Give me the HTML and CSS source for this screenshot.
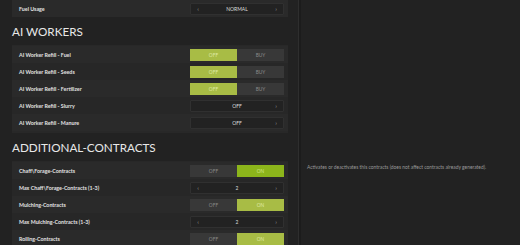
FILE: index.html
```html
<!DOCTYPE html>
<html>
	<head>
		<meta charset="UTF-8">
		<title>Settings</title>
		<link rel="stylesheet" href="styles.css">
	</head>
	<body>
		<div class="page">
			<div class="main">
				<div class="panel panelTop">
					<div class="row">
						<span class="label">Fuel Usage</span>
						<div class="select"><span class="arr">&lsaquo;</span><span class="val">NORMAL</span><span class="arr">&rsaquo;</span></div>
					</div>
				</div>
				<h2 class="title">AI WORKERS</h2>
				<div class="panel">
					<div class="row">
						<span class="label">AI Worker Refill - Fuel</span>
						<div class="toggle"><span class="opt sel">OFF</span><span class="opt">BUY</span></div>
					</div>
					<div class="row alt">
						<span class="label">AI Worker Refill - Seeds</span>
						<div class="toggle"><span class="opt sel">OFF</span><span class="opt">BUY</span></div>
					</div>
					<div class="row">
						<span class="label">AI Worker Refill - Fertilizer</span>
						<div class="toggle"><span class="opt sel">OFF</span><span class="opt">BUY</span></div>
					</div>
					<div class="row alt">
						<span class="label">AI Worker Refill - Slurry</span>
						<div class="select"><span class="arr"></span><span class="val">OFF</span><span class="arr">&rsaquo;</span></div>
					</div>
					<div class="row">
						<span class="label">AI Worker Refill - Manure</span>
						<div class="select"><span class="arr"></span><span class="val">OFF</span><span class="arr">&rsaquo;</span></div>
					</div>
				</div>
				<h2 class="title">ADDITIONAL-CONTRACTS</h2>
				<div class="panel">
					<div class="row">
						<span class="label">Chaff\Forage-Contracts</span>
						<div class="toggle"><span class="opt">OFF</span><span class="opt sel hot">ON</span></div>
					</div>
					<div class="row alt">
						<span class="label">Max Chaff\Forage-Contracts (1-3)</span>
						<div class="select"><span class="arr">&lsaquo;</span><span class="val">2</span><span class="arr">&rsaquo;</span></div>
					</div>
					<div class="row">
						<span class="label">Mulching-Contracts</span>
						<div class="toggle"><span class="opt">OFF</span><span class="opt sel">ON</span></div>
					</div>
					<div class="row alt">
						<span class="label">Max Mulching-Contracts (1-3)</span>
						<div class="select"><span class="arr">&lsaquo;</span><span class="val">2</span><span class="arr">&rsaquo;</span></div>
					</div>
					<div class="row">
						<span class="label">Rolling-Contracts</span>
						<div class="toggle"><span class="opt">OFF</span><span class="opt sel">ON</span></div>
					</div>
				</div>
			</div>
			<div class="divider"></div>
			<div class="side">
				<p class="help">Activates or deactivates this contracts (does not affect contracts already generated).</p>
			</div>
		</div>
	</body>
</html>
```

FILE: styles.css
```css
*{margin:0;padding:0;box-sizing:border-box;}
html,body{height:100%;overflow:hidden;}
body{background:#222;font-family:Lato,"Noto Sans",sans-serif;color:#ddd;}
.page{display:flex;height:245px;}
.main{width:288px;padding-left:12px;flex:none;}
.panel{background:#282828;padding:1px 0 2px;}
.panelTop{padding:0;}
.row{display:flex;align-items:center;justify-content:space-between;height:17px;padding:0 4px 0 7px;background:#2a2a2a;}
.row.alt{background:#272727;}
.label{font-size:5.3px;font-weight:700;color:#e2e2e2;}
.title{font-weight:400;font-size:11.7px;color:#e8e8e8;height:27px;line-height:28px;}
.panel + .title{height:28px;line-height:29px;}
.toggle{display:flex;width:94px;height:12px;}
.opt{flex:1;display:flex;align-items:center;justify-content:center;font-size:4.8px;color:#8a8a8a;background:#383838;}
.opt.sel{background:#a8bc45;color:#dfe9a5;}
.opt.sel.hot{background:#8cb51b;color:#cfe58a;}
.select{display:flex;align-items:center;width:94px;height:12px;background:#222;border:1px solid #303030;border-radius:1px;padding:0 5px;}
.select .val{flex:1;text-align:center;font-size:5px;color:#ddd;}
.select .arr{width:4px;font-size:6px;color:#999;text-align:center;}
.divider{width:3px;margin-left:10px;background:#1c1c1c;border-left:1px solid #2e2e2e;}
.side{flex:1;padding:11px 0 0 6px;}
.help{font-size:4.9px;color:#9a9a9a;margin-top:153px;}
```
